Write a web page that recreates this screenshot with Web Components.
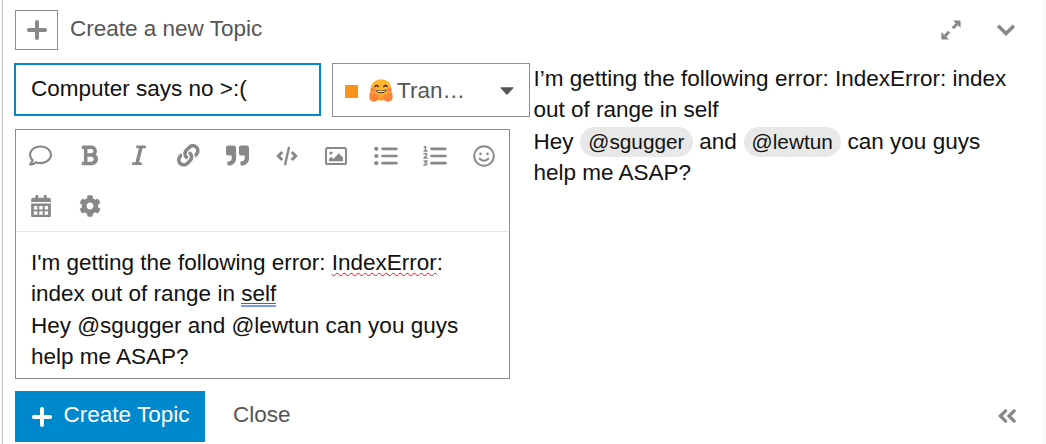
<!DOCTYPE html>
<html lang="en">
<head>
<meta charset="utf-8">
<title>Create a new Topic</title>
<style>
html,body{margin:0;height:100%;overflow:hidden}
body{background:#fafafa;font-family:"Liberation Sans",Arial,sans-serif;font-size:22.5px;line-height:31.5px;color:#111}
</style>
</head>
<body>
<topic-composer></topic-composer>
<script>
const svg = (w, h, box, body) => `<svg width="${w}" height="${h}" viewBox="${box}" fill="currentColor">${body}</svg>`;
const line = (d, w, extra = '') => `<path d="${d}" fill="none" stroke="currentColor" stroke-width="${w}" stroke-linecap="round" ${extra}/>`;
const cells = [0, 1].map(r => [0, 1, 2].map(c => {
  const x = 62 + c * 122, y = 248 + r * 122;
  return `M${x + 10} ${y}h60q10 0 10 10v60q0 10-10 10h-60q-10 0-10-10v-60q0-10 10-10z`;
}).join('')).join('');
const ICONS = {
  plus: svg(22, 22, '0 0 22 22', line('M11 2.9v16.2M2.9 11h16.2', 4)),
  expand: svg(20, 20, '0 0 20 20', line('M11.8 8.2l4-4M8.2 11.8l-4 4', 3, 'style="stroke-linecap:butt"') + '<path d="M12.2.4h6.6q.8 0 .8.8v6.6l-2.1-1.7-3.6-3.6zM7.8 19.6H1.2q-.8 0-.8-.8v-6.6l2.1 1.7 3.6 3.6z"/>'),
  down: svg(20, 14, '0 0 20 14', line('M2.1 2.8L10 10.6l7.9-7.8', 3.5, 'style="stroke-linecap:butt"')),
  collapse: svg(20, 16, '0 0 20 16', line('M8.6 2.8L3.4 8l5.2 5.2M17.2 2.8L12 8l5.2 5.2', 3.3)),
  comment: svg(23, 23, '0 0 512 512', '<path d="M256 32C114.6 32 0 125.1 0 240c0 47.6 19.9 91.2 52.9 126.3C38 405.7 7 439.1 6.5 439.5c-6.6 7-8.4 17.2-4.6 26S14.4 480 24 480c61.5 0 110-25.7 139.1-46.3C192 442.8 223.2 448 256 448c141.4 0 256-93.1 256-208S397.4 32 256 32zm0 368c-26.7 0-53.1-4.1-78.4-12.1l-22.7-7.2-19.5 13.8c-14.3 10.1-33.9 21.4-57.5 29 7.3-12.1 14.4-25.7 19.9-40.2l10.6-28.1-20.6-21.8C69.7 314.1 48 282.2 48 240c0-88.2 93.3-160 208-160s208 71.8 208 160-93.3 160-208 160z"/>'),
  bold: svg(17, 22.6, '0 0 384 512', '<path d="M333.49 238a122 122 0 0 0 27-65.21C367.87 96.49 308 32 233.42 32H34a16 16 0 0 0-16 16v48a16 16 0 0 0 16 16h31.87v288H34a16 16 0 0 0-16 16v48a16 16 0 0 0 16 16h209.32c70.8 0 134.14-51.75 141-122.4 4.74-48.45-16.39-92.06-50.83-119.6zM145.66 112h87.76a48 48 0 0 1 0 96h-87.76zm87.76 288h-87.76V288h87.76a56 56 0 0 1 0 112z"/>'),
  italic: svg(14, 22.6, '0 0 320 512', '<path d="M320 48v32a16 16 0 0 1-16 16h-62.76l-80 320H208a16 16 0 0 1 16 16v32a16 16 0 0 1-16 16H16a16 16 0 0 1-16-16v-32a16 16 0 0 1 16-16h62.76l80-320H112a16 16 0 0 1-16-16V48a16 16 0 0 1 16-16h192a16 16 0 0 1 16 16z"/>'),
  link: svg(22.6, 22.6, '0 0 512 512', '<path d="M326.612 185.391c59.747 59.809 58.927 155.698.36 214.59-.11.12-.24.25-.36.37l-67.2 67.2c-59.27 59.27-155.699 59.262-214.96 0-59.27-59.26-59.27-155.7 0-214.96l37.106-37.106c9.84-9.84 26.786-3.3 27.294 10.606.648 17.722 3.826 35.527 9.69 52.721 1.986 5.822.567 12.262-3.783 16.612l-13.087 13.087c-28.026 28.026-28.905 73.66-1.155 101.96 28.024 28.579 74.086 28.749 102.325.51l67.2-67.19c28.191-28.191 28.073-73.757 0-101.83-3.701-3.694-7.429-6.564-10.341-8.569a16.037 16.037 0 0 1-6.947-12.606c-.396-10.567 3.348-21.456 11.698-29.806l21.054-21.055c5.521-5.521 14.182-6.199 20.584-1.731a152.482 152.482 0 0 1 20.522 17.197zM467.547 44.449c-59.261-59.262-155.69-59.27-214.96 0l-67.2 67.2c-.12.12-.25.25-.36.37-58.566 58.892-59.387 154.781.36 214.59a152.454 152.454 0 0 0 20.521 17.196c6.402 4.468 15.064 3.789 20.584-1.731l21.054-21.055c8.35-8.35 12.094-19.239 11.698-29.806a16.037 16.037 0 0 0-6.947-12.606c-2.912-2.005-6.64-4.875-10.341-8.569-28.073-28.073-28.191-73.639 0-101.83l67.2-67.19c28.239-28.239 74.3-28.069 102.325.51 27.75 28.3 26.872 73.934-1.155 101.96l-13.087 13.087c-4.35 4.35-5.769 10.79-3.783 16.612 5.864 17.194 9.042 34.999 9.69 52.721.509 13.906 17.454 20.446 27.294 10.606l37.106-37.106c59.271-59.259 59.271-155.699.001-214.959z"/>'),
  quote: svg(23, 23, '0 0 512 512', '<path d="M464 32H336c-26.5 0-48 21.5-48 48v128c0 26.5 21.5 48 48 48h80v64c0 35.3-28.7 64-64 64h-8c-13.3 0-24 10.7-24 24v48c0 13.3 10.7 24 24 24h8c88.4 0 160-71.6 160-160V80c0-26.5-21.5-48-48-48zm-288 0H48C21.5 32 0 53.5 0 80v128c0 26.5 21.5 48 48 48h80v64c0 35.3-28.7 64-64 64h-8c-13.3 0-24 10.7-24 24v48c0 13.3 10.7 24 24 24h8c88.4 0 160-71.6 160-160V80c0-26.5-21.5-48-48-48z"/>'),
  code: svg(22, 20, '0 0 22 20', line('M12.9 1.8L9.2 18.2', 2.4) + line('M6.3 6L2.3 10l4 4M15.7 6l4 4-4 4', 3, 'style="stroke-linecap:butt"')),
  image: svg(22, 18, '0 0 22 18', '<rect x="1" y="1" width="20" height="16" rx="1.6" fill="none" stroke="currentColor" stroke-width="2"/><circle cx="6" cy="6" r="1.6"/><path d="M4 14.2v-2.2l2.3-2.3 2.2 2.2L13.7 6.2 18 10.5v3.7z"/>'),
  ul: svg(24, 20, '0 0 24 20', [2.8, 10, 17.2].map(y => `<circle cx="2.3" cy="${y}" r="2.1"/>` + line(`M8.6 ${y}H22.4`, 2.7)).join('')),
  ol: svg(24, 20, '0 0 24 20', [2.8, 10, 17.2].map(y => line(`M8.6 ${y}H22.4`, 2.7)).join('') + line('M1.3 1.1l1.2-.5v4.2M1.1 5h2.9M1.1 7.8c3.8-1.2 3 1.1.2 4.2h2.9M1.1 14.9h2.6L2.2 16.6c2.8.2 1.7 3.3-1.2 2.2', 1.5)),
  smile: svg(22, 22, '0 0 22 22', '<circle cx="11" cy="11" r="9.8" fill="none" stroke="currentColor" stroke-width="1.9"/><circle cx="7.5" cy="8.9" r="1.3"/><circle cx="14.5" cy="8.9" r="1.3"/>' + line('M6.7 13.6c2.2 2.8 6.4 2.8 8.6 0', 1.9)),
  calendar: svg(20, 22.6, '0 0 448 512', `<path fill-rule="evenodd" d="M0 160v-48q0-48 48-48h48V16q0-16 16-16h32q16 0 16 16v48h128V16q0-16 16-16h32q16 0 16 16v48h48q48 0 48 48v48zM0 192h448v272q0 48-48 48H48q-48 0-48-48z${cells}"/>`),
  cog: svg(22, 22, '0 0 512 512', '<path d="M487.4 315.7l-42.6-24.6c4.3-23.2 4.3-47 0-70.2l42.6-24.6c4.9-2.8 7.1-8.6 5.5-14-11.1-35.6-30-67.8-54.7-94.6-3.8-4.1-10-5.1-14.8-2.3L380.8 110c-17.9-15.4-38.5-27.3-60.8-35.1V25.8c0-5.6-3.9-10.5-9.4-11.7-36.7-8.2-74.3-7.8-109.2 0-5.5 1.2-9.4 6.1-9.4 11.7V75c-22.2 7.9-42.8 19.8-60.8 35.1L88.7 85.5c-4.9-2.8-11-1.9-14.8 2.3-24.7 26.7-43.6 58.9-54.7 94.6-1.7 5.4.6 11.2 5.5 14L67.3 221c-4.3 23.2-4.3 47 0 70.2l-42.6 24.6c-4.9 2.8-7.1 8.6-5.5 14 11.1 35.6 30 67.8 54.7 94.6 3.8 4.1 10 5.1 14.8 2.3l42.6-24.6c17.9 15.4 38.5 27.3 60.8 35.1v49.2c0 5.6 3.9 10.5 9.4 11.7 36.7 8.2 74.3 7.8 109.2 0 5.5-1.2 9.4-6.1 9.4-11.7v-49.2c22.2-7.9 42.8-19.8 60.8-35.1l42.6 24.6c4.9 2.8 11 1.9 14.8-2.3 24.7-26.7 43.6-58.9 54.7-94.6 1.5-5.5-.7-11.3-5.6-14.1zM256 336c-44.1 0-80-35.9-80-80s35.9-80 80-80 80 35.9 80 80-35.9 80-80 80z"/>'),
  caret: svg(14, 8, '0 0 14 8', '<path d="M1.1.3h11.8q.9.2.3 1L7.8 7.2q-.8.7-1.6 0L.8 1.3Q.2.5 1.1.3z"/>'),
  hug: svg(24, 23, '0 0 24 23', `<circle cx="12" cy="10.8" r="10.6" fill="#fdb52e"/><path d="M2.6 15.8a10.6 10.6 0 0 0 18.8 0" fill="#f9a12b"/>
    <circle cx="3.6" cy="10.9" r="2.1" fill="#fb7a45"/><circle cx="20.4" cy="10.9" r="2.1" fill="#fb7a45"/>
    <path d="M5.9 7.7q1.7-2.4 3.4 0M14.7 7.7q1.7-2.4 3.4 0" fill="none" stroke="#3c2c24" stroke-width="1.3" stroke-linecap="round"/>
    <path d="M6.2 10.6q5.8 2.2 11.6 0-.9 3.7-5.8 3.7t-5.8-3.7z" fill="#3c2c24"/><path d="M7.4 11.5q4.6 1.4 9.2 0-.4 1-1.2 1.3-3.4.7-6.8 0-.8-.3-1.2-1.3z" fill="#fff"/>
    <path d="M1.2 13.5q1.2-1.3 1.9.8l.6 1.2 1.2-2q1.4-1.2 1.5.8l-.2 1.6 1.4-.8q1.5 0 .9 1.5 1.3.3 1 1.8-.3 3.8-4.2 4.3Q.2 22.9.3 17.6q0-2.6.9-4.1zM22.8 13.5q-1.2-1.3-1.9.8l-.6 1.2-1.2-2q-1.4-1.2-1.5.8l.2 1.6-1.4-.8q-1.5 0-.9 1.5-1.3.3-1 1.8.3 3.8 4.2 4.3 5.1.2 5-5.1 0-2.6-.9-4.1z" fill="#fb8238"/>`)
};

const define = (name, css, html) => customElements.define(name, class extends HTMLElement {
  constructor() {
    super();
    this.attachShadow({ mode: 'open' }).innerHTML =
      `<style>*{box-sizing:border-box}${css}</style>${typeof html === 'function' ? html(this) : html}`;
  }
});

define('ui-icon', ':host{display:inline-flex;align-items:center;justify-content:center;color:#888;flex:none}svg{display:block}',
  el => ICONS[el.getAttribute('name')] || '');

define('composer-header', `
  :host{display:flex;align-items:center;height:40px;color:#555}
  .add{width:43px;height:40px;border:1px solid #8d8d8d;display:flex;align-items:center;justify-content:center}
  .title{flex:1;margin-left:12px;padding-bottom:2px}
  .tools{display:flex;align-items:center;gap:35px;padding-right:25px}`,
  `<div class="add"><ui-icon name="plus"></ui-icon></div><div class="title"><slot></slot></div>
   <div class="tools"><ui-icon name="expand"></ui-icon><ui-icon name="down"></ui-icon></div>`);

define('title-field', `
  :host{display:flex;align-items:center;box-sizing:border-box;width:307px;height:53px;border:2px solid #0088cc;padding:0 15px 1px;background:#fff}`,
  '<slot></slot>');

define('category-select', `
  :host{display:flex;align-items:center;box-sizing:border-box;width:198px;height:54px;border:1px solid #8d8d8d;padding:0 15px 0 12px;color:#555}
  i{width:13px;height:13px;background:#f7941d;margin:3px 11px 0 0}
  span{margin-left:4px;flex:1;padding-top:1px}
  .caret{color:#555;margin-top:1px}`,
  '<i></i><ui-icon name="hug"></ui-icon><span><slot></slot></span><ui-icon class="caret" name="caret"></ui-icon>');

define('editor-toolbar', `
  :host{display:grid;box-sizing:border-box;grid-template-columns:repeat(10,49.3px);grid-template-rows:51px 50px;height:102px;border-bottom:1px solid #e6e6e6;overflow:hidden}`,
  ['comment', 'bold', 'italic', 'link', 'quote', 'code', 'image', 'ul', 'ol', 'smile', 'calendar', 'cog'].map(n => `<ui-icon name="${n}"></ui-icon>`).join(''));

define('post-editor', `
  :host{display:block;box-sizing:border-box;width:495px;height:250px;border:1px solid #8d8d8d;background:#fff}
  .text{padding:14.5px 15px 0;white-space:nowrap}`,
  '<editor-toolbar></editor-toolbar><div class="text"><slot></slot></div>');

define('spell-mark', `
  :host{display:inline;text-decoration:underline wavy #ff1010 1.2px;text-underline-offset:2px;text-decoration-skip-ink:none}
  :host([kind=grammar]){text-decoration:none;padding-bottom:1px;
    background:linear-gradient(#3d5fe8,#3d5fe8) 0 calc(100% - 3px)/100% 1px no-repeat,linear-gradient(#7c95ff,#7c95ff) 0 100%/100% 2px no-repeat}`,
  '<slot></slot>');

define('user-mention', `
  :host{display:inline-block;background:#e8e8e8;border-radius:15px;height:30px;line-height:30px;padding:0 8px;margin:0 .5px;font-size:20.8px;vertical-align:baseline}`,
  '<slot></slot>');

define('post-preview', ':host{display:block;white-space:nowrap;margin-top:-.5px;margin-left:-.5px}', '<slot></slot>');

define('composer-footer', `
  :host{display:flex;align-items:center;height:51px;color:#555}
  .create{display:flex;align-items:center;height:51px;width:190px;background:#0088cc;color:#fff;padding-left:16px}
  .create ui-icon{color:#fff;margin-top:1px}
  .create span{margin-left:10.5px;padding-bottom:3px}
  .close{margin-left:28px;flex:1;padding-bottom:3px}
  .fold{margin-right:24px;margin-top:-2px}`,
  `<div class="create"><ui-icon name="plus"></ui-icon><span>Create Topic</span></div><div class="close">Close</div><ui-icon class="fold" name="collapse"></ui-icon>`);

define('topic-composer', `
  :host{display:block;box-sizing:border-box;width:1039px;height:444px;margin-left:2px;border-left:1px solid #bdbdbd;background:#fff;padding:10px 0 0 12px}
  .body{display:grid;grid-template-columns:515px 1fr;column-gap:4px;margin-top:13px;height:316px}
  .fields{display:flex;align-items:flex-start;gap:11px;margin-left:-1px}
  post-editor{margin-top:12px}
  composer-footer{margin-top:12px}`,
  `<composer-header>Create a new Topic</composer-header>
   <div class="body">
     <div><div class="fields"><title-field>Computer says no &gt;:(</title-field><category-select>Tran…</category-select></div>
       <post-editor>I'm getting the following error: <spell-mark>IndexError</spell-mark>:<br>index out of range in <spell-mark kind="grammar">self</spell-mark><br>Hey @sgugger and @lewtun can you guys<br>help me ASAP?</post-editor></div>
     <post-preview>I’m getting the following error: IndexError: index<br>out of range in self<br>Hey <user-mention>@sgugger</user-mention> and <user-mention>@lewtun</user-mention> can you guys<br>help me ASAP?</post-preview>
   </div>
   <composer-footer></composer-footer>`);
</script>
</body>
</html>
